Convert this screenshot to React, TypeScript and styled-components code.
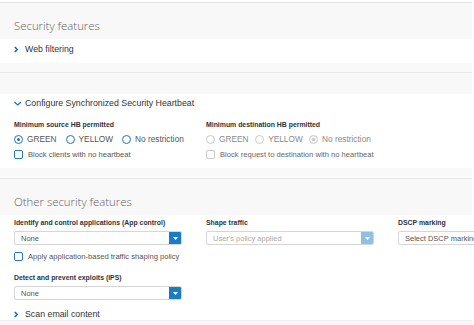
import React from "react";
import styled, { createGlobalStyle } from "styled-components";

const Global = createGlobalStyle`
  html, body { margin: 0; padding: 0; background: #fff; overflow: hidden; }
  body { font-family: "Liberation Sans", Arial, sans-serif; color: #333; width: 474px; height: 325px; }
  * { box-sizing: border-box; }
`;

const Page = styled.div`
  width: 472px;
  padding-top: 2px;
`;

const GrayHeader = styled.div<{ $h: number; $top?: boolean }>`
  background: #f8f8f8;
  height: ${(p) => p.$h}px;
  border-top: ${(p) => (p.$top ? "1px solid #e6e6e6" : "none")};
  padding: 0 14px 6px;
  display: flex;
  align-items: flex-end;
`;

const Gap = styled.div<{ $h: number }>`
  background: #f9f9f9;
  height: ${(p) => p.$h}px;
  border-bottom: 1px solid #e8e8e8;
`;

const Title = styled.div`
  font-family: "Open Sans", "Liberation Sans", sans-serif;
  font-weight: 300;
  font-size: 11.4px;
  color: #5f5f5f;
  line-height: 14px;
  white-space: nowrap;
`;

const Card = styled.div<{ $h: number }>`
  background: #fff;
  height: ${(p) => p.$h}px;
  padding: 0 14px;
`;

const Toggle = styled.div<{ $top: number }>`
  display: flex;
  align-items: center;
  gap: 3px;
  padding-top: ${(p) => p.$top}px;
  font-size: 8.8px;
  color: #333;
  line-height: 12px;
  height: ${(p) => p.$top + 12}px;
  white-space: nowrap;
`;

const Chevron = ({ open }: { open?: boolean }) => (
  <svg width="8" height="7" viewBox="0 0 8 7">
    {open ? (
      <path d="M0.5 2 L3.75 5 L7 2" fill="none" stroke="#1a6fb5" strokeWidth="1.1" />
    ) : (
      <path d="M0.8 1 L3.2 3.5 L0.8 6" fill="none" stroke="#1a6fb5" strokeWidth="1.6" />
    )}
  </svg>
);

const Columns = styled.div<{ $top: number }>`
  display: grid;
  grid-template-columns: 168px 168px 168px;
  column-gap: 24px;
  padding-top: ${(p) => p.$top}px;
`;

const Col = styled.div`
  display: flex;
  flex-direction: column;
`;

const Label = styled.div<{ $top?: number }>`
  font-size: 6.9px;
  font-weight: 700;
  color: #2a3440;
  line-height: 10px;
  white-space: nowrap;
  margin-top: ${(p) => p.$top ?? 0}px;
`;

const RadioRow = styled.div`
  display: flex;
  align-items: center;
  margin-top: 3px;
  height: 12px;
`;

const RadioItem = styled.div<{ $w: number; $disabled?: boolean }>`
  display: flex;
  align-items: center;
  gap: 4px;
  width: ${(p) => p.$w}px;
  font-size: 8.3px;
  color: ${(p) => (p.$disabled ? "#8a8a8a" : "#555")};
  white-space: nowrap;
`;

const RadioCircle = styled.span<{ $checked?: boolean; $disabled?: boolean }>`
  width: 9px;
  height: 9px;
  border-radius: 50%;
  border: ${(p) => (p.$disabled ? "1px solid #cacaca" : "1.6px solid #1f74b8")};
  background: ${(p) => (p.$disabled && p.$checked ? "#f6f6f6" : "#fff")};
  display: inline-flex;
  align-items: center;
  justify-content: center;
  flex: none;
  &::after {
    content: "";
    display: ${(p) => (p.$checked ? "block" : "none")};
    width: 3px;
    height: 3px;
    border-radius: 50%;
    background: ${(p) => (p.$disabled ? "#c4c4c4" : "#1f74b8")};
  }
`;

const CheckRow = styled.div<{ $top: number; $disabled?: boolean }>`
  display: flex;
  align-items: center;
  gap: 5px;
  margin-top: ${(p) => p.$top}px;
  font-size: 7.6px;
  color: ${(p) => (p.$disabled ? "#666" : "#555")};
  white-space: nowrap;
  height: 10px;
`;

const Box = styled.span<{ $disabled?: boolean }>`
  width: 9px;
  height: 9px;
  border-radius: 2px;
  border: ${(p) => (p.$disabled ? "1px solid #cacaca" : "1.2px solid #2a7ab8")};
  flex: none;
`;

const Select = styled.div<{ $disabled?: boolean }>`
  margin-top: 3px;
  height: 14px;
  border: 1px solid #d6d6d6;
  border-radius: 2px;
  display: flex;
  align-items: center;
  justify-content: space-between;
  font-size: 7.5px;
  color: ${(p) => (p.$disabled ? "#aaa" : "#555")};
  background: #fff;
  white-space: nowrap;
  overflow: hidden;
`;

const SelectText = styled.span`
  padding-left: 6px;
`;

const Arrow = styled.span<{ $disabled?: boolean }>`
  width: 13px;
  height: 14px;
  margin-right: -1px;
  background: ${(p) => (p.$disabled ? "#8fc0e4" : "#1a7cc4")};
  border-radius: 0 2px 2px 0;
  display: flex;
  align-items: center;
  justify-content: center;
  flex: none;
`;

const Caret = () => (
  <svg width="5" height="3" viewBox="0 0 5 3">
    <path d="M0 0 L5 0 L2.5 3 Z" fill="#fff" />
  </svg>
);

const Dropdown = ({ text, disabled, arrow = true }: { text: string; disabled?: boolean; arrow?: boolean }) => (
  <Select $disabled={disabled}>
    <SelectText>{text}</SelectText>
    {arrow && (
      <Arrow $disabled={disabled}>
        <Caret />
      </Arrow>
    )}
  </Select>
);

const Radio = ({ label, w, checked, disabled }: { label: string; w: number; checked?: boolean; disabled?: boolean }) => (
  <RadioItem $w={w} $disabled={disabled}>
    <RadioCircle $checked={checked} $disabled={disabled} />
    {label}
  </RadioItem>
);

const Check = ({ label, top, disabled }: { label: string; top: number; disabled?: boolean }) => (
  <CheckRow $top={top} $disabled={disabled}>
    <Box $disabled={disabled} />
    {label}
  </CheckRow>
);

const BottomBand = styled.div`
  background: #f8f8f8;
  height: 6px;
  border-top: 1px solid #eee;
`;

export default function App() {
  return (
    <>
      <Global />
      <Page>
        <GrayHeader $h={37} $top>
          <Title>Security features</Title>
        </GrayHeader>
        <Card $h={24}>
          <Toggle $top={4}>
            <Chevron />
            Web filtering
          </Toggle>
        </Card>
        <Gap $h={10} />
        <GrayHeader $h={21} />
        <Card $h={74}>
          <Toggle $top={3}>
            <Chevron open />
            Configure Synchronized Security Heartbeat
          </Toggle>
          <Columns $top={11}>
            <Col>
              <Label>Minimum source HB permitted</Label>
              <RadioRow>
                <Radio label="GREEN" w={53} checked />
                <Radio label="YELLOW" w={58} />
                <Radio label="No restriction" w={60} />
              </RadioRow>
              <Check label="Block clients with no heartbeat" top={4} />
            </Col>
            <Col>
              <Label>Minimum destination HB permitted</Label>
              <RadioRow>
                <Radio label="GREEN" w={53} disabled />
                <Radio label="YELLOW" w={58} disabled />
                <Radio label="No restriction" w={70} checked disabled />
              </RadioRow>
              <Check label="Block request to destination with no heartbeat" top={4} disabled />
            </Col>
          </Columns>
        </Card>
        <Gap $h={11} />
        <GrayHeader $h={36}>
          <Title>Other security features</Title>
        </GrayHeader>
        <Card $h={105}>
          <Columns $top={3}>
            <Col>
              <Label>Identify and control applications (App control)</Label>
              <Dropdown text="None" />
              <Check label="Apply application-based traffic shaping policy" top={6} />
              <Label $top={12}>Detect and prevent exploits (IPS)</Label>
              <Dropdown text="None" />
            </Col>
            <Col>
              <Label>Shape traffic</Label>
              <Dropdown text="User's policy applied" disabled />
            </Col>
            <Col>
              <Label>DSCP marking</Label>
              <Dropdown text="Select DSCP marking" arrow={false} />
            </Col>
          </Columns>
          <Toggle $top={8}>
            <Chevron />
            Scan email content
          </Toggle>
        </Card>
        <BottomBand />
      </Page>
    </>
  );
}
